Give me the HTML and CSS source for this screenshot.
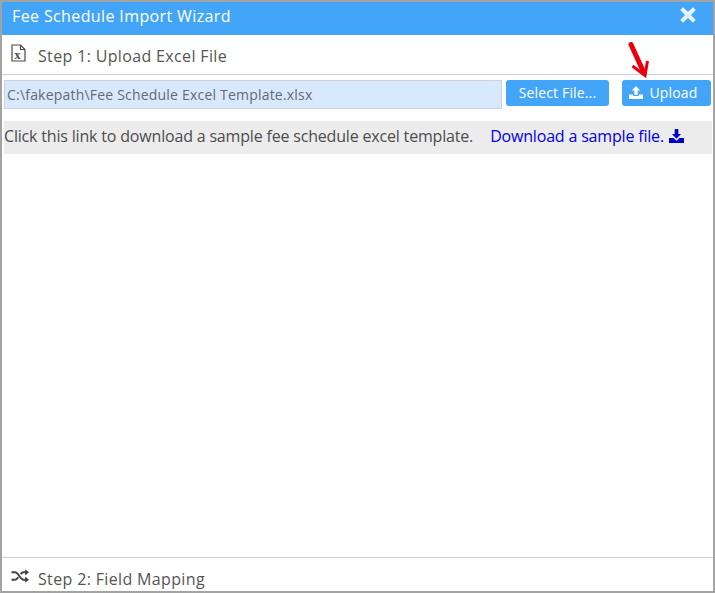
FILE: index.html
```html
<!DOCTYPE html>
<html lang="en">
<head>
<meta charset="utf-8">
<title>Fee Schedule Import Wizard</title>
<link rel="stylesheet" href="styles.css">
</head>
<body>
<div class="window">
  <header class="titlebar">
    <span class="title">Fee Schedule Import Wizard</span>
    <svg class="close" viewBox="0 0 16 16" width="16" height="16"><path d="M3 0.3 L8 4.8 L13 0.3 L15.8 3 L11 8 L15.8 13 L13 15.8 L8 11 L3 15.8 L0.2 13 L5 8 L0.2 3 Z" fill="#e4f0fd"/></svg>
  </header>
  <section class="step step-one">
    <svg class="step-icon" viewBox="0 0 15 18" width="15" height="18"><path d="M1 1 H9.5 L14 5.5 V17 H1 Z M9.5 1 V5.5 H14" fill="none" stroke="#4a4a4a" stroke-width="1.2"/><text x="3.4" y="14.8" class="x-mark">x</text></svg>
    <span class="step-label">Step 1: Upload Excel File</span>
  </section>
  <div class="upload-row">
    <div class="file-path">C:\fakepath\Fee Schedule Excel Template.xlsx</div>
    <button class="btn btn-select">Select File...</button>
    <button class="btn btn-upload">
      <svg viewBox="0 0 14 13" width="14" height="13"><path d="M7 0 L11.2 4.4 H8.7 V8.8 H5.3 V4.4 H2.8 Z M0 8.4 H4.2 V10 H9.8 V8.4 H14 V13 H0 Z" fill="#fff"/></svg>
      <span>Upload</span>
    </button>
  </div>
  <div class="info-bar">
    <span class="info-text">Click this link to download a sample fee schedule excel template.</span>
    <a class="download" href="#"><span>Download a sample file.</span>
      <svg viewBox="0 0 14 13" width="15" height="14"><path d="M5.3 0 H8.7 V4.6 H11.2 L7 9 L2.8 4.6 H5.3 Z M0 8.4 H4.2 L7 11 L9.8 8.4 H14 V13 H0 Z" fill="#0000cc"/></svg>
    </a>
  </div>
  <div class="spacer"></div>
  <section class="step step-two">
    <svg class="step-icon" viewBox="0 0 18 14" width="18" height="14"><path d="M0.5 3.3 H4 C7.5 3.3 9 10.7 12.5 10.7 H15 M0.5 10.7 H4 C5.5 10.7 6.4 9.5 7.2 8.2 M9.6 5.2 C10.4 4.2 11.3 3.3 12.5 3.3 H15" fill="none" stroke="#444" stroke-width="2"/><path d="M14.2 0.2 L18 3.3 L14.2 6.4 Z M14.2 7.6 L18 10.7 L14.2 13.8 Z" fill="#444"/></svg>
    <span class="step-label">Step 2: Field Mapping</span>
  </section>
  <svg class="arrow" viewBox="0 0 24 36" width="24" height="36"><path d="M3 2.5 L16 31" stroke="#e8000f" stroke-width="5" stroke-linecap="round" fill="none"/><path d="M4.5 24 L17 33.5 L19.5 19" stroke="#e8000f" stroke-width="3" fill="none"/></svg>
</div>
</body>
</html>
```
FILE: styles.css
```css
html, body {
  margin: 0;
  padding: 0;
  background: #fff;
}
.window {
  position: relative;
  box-sizing: border-box;
  width: 715px;
  height: 593px;
  border: 2px solid #a3a3a3;
  display: flex;
  flex-direction: column;
  overflow: hidden;
  font-family: "Open Sans", sans-serif;
  color: #4d4d4d;
}
.titlebar {
  flex: 0 0 33px;
  background: #42a5f7;
  color: #fff;
  display: flex;
  align-items: center;
  justify-content: space-between;
  padding: 0 17px 0 10px;
  font-size: 16px;
}
.title {
  letter-spacing: 0.38px;
  margin-top: -6px;
}
.close {
  margin-top: -7px;
}
.step {
  display: flex;
  align-items: center;
  font-size: 16px;
  color: #555;
}
.step-label {
  letter-spacing: 0.35px;
}
.step-one {
  flex: 0 0 39px;
  border-bottom: 1px solid #d2d2d2;
  padding-left: 9px;
  gap: 12px;
}
.step-one .step-label {
  margin-top: 2px;
}
.step-one .step-icon {
  margin-top: -4px;
}
.x-mark {
  font-family: "Liberation Serif", serif;
  font-size: 12px;
  font-weight: bold;
  fill: #444;
}
.upload-row {
  display: flex;
  align-items: flex-start;
  padding: 5px 2px 0;
  height: 41px;
}
.file-path {
  box-sizing: border-box;
  width: 498px;
  height: 29px;
  background: #d9e9fd;
  border: 1px solid #cfd3d8;
  font-size: 14px;
  letter-spacing: 0.2px;
  line-height: 27px;
  padding-left: 2px;
  color: #5f6b78;
}
.btn {
  height: 26px;
  border: none;
  border-radius: 3px;
  background: #42a5f7;
  color: #fff;
  font-family: "Open Sans", sans-serif;
  font-size: 14px;
  padding: 0 0 2px;
  display: flex;
  align-items: center;
  justify-content: center;
}
.btn-select {
  width: 103px;
  margin-left: 4px;
  letter-spacing: 0.15px;
}
.btn-upload {
  width: 89px;
  margin-left: 13px;
  gap: 7px;
  padding-right: 7px;
  letter-spacing: 0.15px;
}
.info-bar {
  box-sizing: border-box;
  margin: 0 1px 0 2px;
  height: 33px;
  padding-bottom: 4px;
  background: #ececec;
  display: flex;
  align-items: center;
  font-size: 16px;
  color: #4d4d4d;
}
.info-text {
  letter-spacing: -0.18px;
}
.download {
  margin-left: 17px;
  color: #0000ee;
  text-decoration: none;
  display: flex;
  align-items: center;
  gap: 5px;
  letter-spacing: -0.18px;
}
.spacer {
  flex: 1;
}
.step-two {
  flex: 0 0 34px;
  border-top: 1px solid #d2d2d2;
  padding: 8px 0 0 9px;
  gap: 9px;
  box-sizing: border-box;
}
.step-two .step-icon {
  margin-top: -6px;
}
.arrow {
  position: absolute;
  left: 626px;
  top: 40px;
}
```
